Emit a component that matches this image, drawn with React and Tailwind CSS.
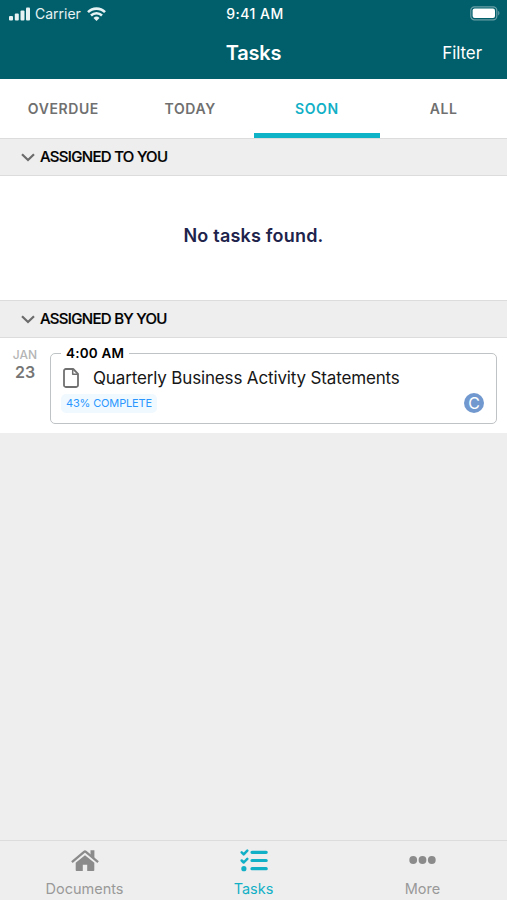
import React, { useState } from 'react';

const tabs = ['Overdue', 'Today', 'Soon', 'All'];

const SignalIcon = () => (
  <svg width="22" height="14" viewBox="0 0 22 14" fill="currentColor">
    <rect x="0" y="9" width="4" height="4.5" rx="1" />
    <rect x="5.8" y="6.5" width="4" height="7" rx="1" />
    <rect x="11.5" y="3.5" width="4" height="10" rx="1" />
    <rect x="17" y="0.5" width="4" height="13" rx="1" />
  </svg>
);

const WifiIcon = () => (
  <svg width="19" height="14" viewBox="0 0 19 14" fill="none" stroke="currentColor">
    <path d="M1 5.2a12 12 0 0 1 17 0" strokeWidth="2.6" />
    <path d="M4 8.5a7.8 7.8 0 0 1 11 0" strokeWidth="2.5" />
    <path d="M9.5 14L6.5 10.9a4.3 4.3 0 0 1 6 0z" fill="currentColor" stroke="none" />
  </svg>
);

const BatteryIcon = () => (
  <svg width="31" height="15" viewBox="0 0 31 15">
    <rect x="0.8" y="0.8" width="26" height="13" rx="3.6" fill="none" stroke="#6a9fa7" strokeWidth="1.2" />
    <rect x="2.6" y="2.6" width="22.4" height="9.4" rx="2" fill="#fff" />
    <path d="M28.2 5.1c1.6.4 1.6 4 0 4.4z" fill="#6a9fa7" />
  </svg>
);

const FileIcon = () => (
  <svg width="16" height="20" viewBox="0 0 16 20" fill="none" stroke="#707070" strokeWidth="1.8" strokeLinejoin="round">
    <path d="M2.8 1h7.4L15 5.8v11.4a1.8 1.8 0 0 1-1.8 1.8H2.8A1.8 1.8 0 0 1 1 17.2V2.8A1.8 1.8 0 0 1 2.8 1z" />
    <path d="M9.7 1v5.3H15" strokeWidth="1.5" />
  </svg>
);

const HomeIcon = () => (
  <svg width="28" height="23" viewBox="0 0 28 23" fill="currentColor">
    <path d="M14 6.2L4.7 13.8V21c0 .7.4 1.1 1.1 1.1h6v-6.300h4.400v6.300h6c.7 0 1.100-.4 1.100-1.100v-7.200z" />
    <path d="M1.800 12.300L13.100 2.900a1.400 1.400 0 0 1 1.800 0l11.300 9.400" fill="none" stroke="currentColor" strokeWidth="2.300" strokeLinecap="square" />
    <path d="M19.500 1.200h3.900v8.500l-3.900-3.300z" />
  </svg>
);

const TasksIcon = () => (
  <svg width="28" height="23" viewBox="0 0 28 23" fill="none" stroke="currentColor" strokeLinecap="round">
    <path d="M1.7 3.300l2 2L7.300 1.600M1.700 11.500l2 2 3.600-3.700" strokeWidth="2.500" strokeLinejoin="round" />
    <circle cx="3.900" cy="19.700" r="2.600" fill="currentColor" stroke="none" />
    <path d="M12 3.300h14.200M12 11.500h14.200M12 19.700h14.200" strokeWidth="3.200" />
  </svg>
);

const MoreIcon = () => (
  <svg width="27" height="22" viewBox="0 0 27 22" fill="currentColor">
    <circle cx="4.2" cy="10" r="3.900" />
    <circle cx="13.5" cy="10" r="3.900" />
    <circle cx="22.8" cy="10" r="3.900" />
  </svg>
);

const SectionHeader = ({ title }) => (
  <div className="flex h-[38px] items-center border-y border-[#dcdcdc] bg-[#eeeeee] pl-[21px]">
    <svg width="14" height="9" viewBox="0 0 14 9" fill="none" stroke="#6b6b6b" strokeWidth="2.2">
      <path d="M1 1.2l6 5.800 6-5.800" />
    </svg>
    <h2 className="ml-[5px] text-[15px] font-medium tracking-[-0.7px] text-black [-webkit-text-stroke:0.2px_black]">{title}</h2>
  </div>
);

const NavItem = ({ icon, label, active }) => (
  <button className={`flex flex-1 flex-col items-center pt-2 ${active ? 'text-[#12b0c6]' : 'text-[#8b8b8b]'}`}>
    <span className="flex h-[23px] items-center">{icon}</span>
    <span className={`mt-[7px] text-[14.5px] leading-5 ${active ? '' : 'text-[#999999]'}`}>{label}</span>
  </button>
);

const App = () => {
  const [activeTab, setActiveTab] = useState('Soon');

  return (
    <div className="flex h-screen flex-col bg-[#eeeeee] font-['Inter',sans-serif]">
      {/* Status bar and title */}
      <header className="h-[79px] bg-[#015f6b] text-white">
        <div className="flex h-[27px] items-center pr-[6px] pl-[9px] text-[14px]">
          <div className="flex flex-1 items-center text-[#e6f2f3]">
            <SignalIcon />
            <span className="mr-[6px] ml-1">Carrier</span>
            <WifiIcon />
          </div>
          <span className="text-[14px] font-medium tracking-[0.5px]">9:41 AM</span>
          <div className="flex flex-1 justify-end"><BatteryIcon /></div>
        </div>
        <div className="grid h-[51px] grid-cols-3 items-center px-[25px]">
          <h1 className="col-start-2 text-center text-[20px] font-semibold tracking-[-0.2px]">Tasks</h1>
          <button className="pt-[2px] text-right text-[17px] tracking-[-0.1px]">Filter</button>
        </div>
      </header>

      {/* Tabs */}
      <div className="flex h-[59px] bg-white">
        {tabs.map(tab => (
          <button
            key={tab}
            onClick={() => setActiveTab(tab)}
            className={`flex-1 border-b-[5px] pt-[5px] text-[14px] font-semibold tracking-[0.6px] uppercase ${
              activeTab === tab
                ? 'border-[#0fb3c8] text-[#12b0c6]'
                : 'border-transparent text-[#707070]'
            }`}
          >
            {tab}
          </button>
        ))}
      </div>

      <main className="flex-1">
        <SectionHeader title="ASSIGNED TO YOU" />
        <div className="flex h-[124px] items-center justify-center bg-white pb-[5px]">
          <p className="text-[18px] font-semibold tracking-[0.2px] text-[#20234b]">No tasks found.</p>
        </div>

        <SectionHeader title="ASSIGNED BY YOU" />
        <div className="flex h-[95px] bg-white pr-[10px]">
          <div className="w-[50px] pt-[9px] text-center">
            <div className="text-[12px] leading-4 font-medium text-[#b5b5b5]">JAN</div>
            <div className="text-[16px] leading-[18px] font-semibold text-[#757575]">23</div>
          </div>
          <fieldset className="mt-[6px] h-[80px] flex-1 rounded-[5px] border border-[#bfc3c5] pl-[10px]">
            <legend className="px-[5px] text-[13.5px] leading-[18px] font-semibold tracking-[0.2px] text-black">4:00 AM</legend>
            <div className="flex h-[31px] items-center pl-[2px]">
              <FileIcon />
              <span className="ml-[14px] pt-[3px] text-[17px] tracking-[-0.15px] text-[#161616]">Quarterly Business Activity Statements</span>
            </div>
            <div className="flex items-center justify-between pr-3">
              <span className="rounded-[5px] bg-[#f0f9ff] px-[5px] text-[11px] leading-[19px] tracking-[-0.15px] text-[#2997ff]">43% COMPLETE</span>
              <span className="flex h-5 w-5 items-center justify-center rounded-full bg-[#7299cf] text-[16px] text-white">C</span>
            </div>
          </fieldset>
        </div>
      </main>

      {/* Bottom navigation */}
      <nav className="flex h-[60px] border-t border-[#dcdcdc]">
        <NavItem icon={<HomeIcon />} label="Documents" />
        <NavItem icon={<TasksIcon />} label="Tasks" active />
        <NavItem icon={<MoreIcon />} label="More" />
      </nav>
    </div>
  );
};

export default App;
